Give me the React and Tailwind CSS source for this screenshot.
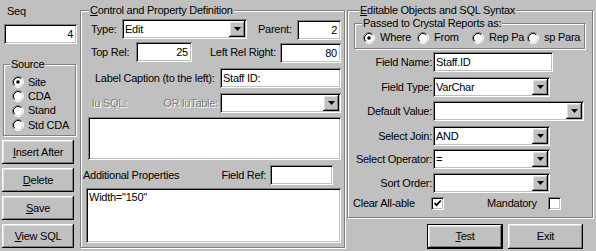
import React from "react";

const sunken =
  "bg-white shadow-[inset_1px_1px_0_#808080,inset_-1px_-1px_0_#fff,inset_2px_2px_0_#000,inset_-2px_-2px_0_#c0c0c0]";
const raised =
  "bg-[#c0c0c0] shadow-[inset_-1px_-1px_0_#000,inset_1px_1px_0_#fff,inset_-2px_-2px_0_#808080,inset_2px_2px_0_#dfdfdf]";
const etched =
  "relative border border-[#808080] shadow-[inset_1px_1px_0_#fff,1px_1px_0_#fff]";
const disabled = "text-[#808080] [text-shadow:1px_1px_0_#fff]";

// plain sunken edit box
const TextBox = ({ value = "", className = "", right = false }) => (
  <div
    className={`${sunken} flex items-center shrink-0 ${
      right ? "justify-end pr-[4px]" : "pl-[3px]"
    } ${className}`}
  >
    {value}
  </div>
);

const ComboBox = ({ value = "", className = "" }) => (
  <div className={`${sunken} flex items-stretch shrink-0 p-[2px] ${className}`}>
    <div className="flex-1 flex items-center pl-[1px] overflow-hidden whitespace-nowrap">
      {value}
    </div>
    <div className={`${raised} w-[16px] flex items-center justify-center`}>
      <svg width="7" height="4" viewBox="0 0 7 4">
        <polygon points="0,0 7,0 3.5,4" fill="#000" />
      </svg>
    </div>
  </div>
);

const Radio = ({ checked }) => (
  <svg width="12" height="12" viewBox="0 0 12 12" className="shrink-0">
    <circle cx="6" cy="6" r="4.5" fill="#fff" />
    <path d="M2.11 9.89 A5.5 5.5 0 0 1 9.89 2.11" stroke="#808080" fill="none" />
    <path d="M9.89 2.11 A5.5 5.5 0 0 1 2.11 9.89" stroke="#fff" fill="none" />
    <path d="M2.82 9.18 A4.5 4.5 0 0 1 9.18 2.82" stroke="#000" fill="none" />
    <path d="M9.18 2.82 A4.5 4.5 0 0 1 2.82 9.18" stroke="#dfdfdf" fill="none" />
    {checked && <circle cx="6" cy="6" r="1.8" fill="#000" />}
  </svg>
);

const CheckBox = ({ checked }) => (
  <div className={`${sunken} w-[13px] h-[13px] shrink-0 flex items-center justify-center`}>
    {checked && (
      <svg width="9" height="9" viewBox="0 0 9 9">
        <polyline points="1.5,4 3.5,6.2 7.8,1.5" stroke="#000" strokeWidth="1.8" fill="none" />
      </svg>
    )}
  </div>
);

const Button = ({ children, className = "", isDefault = false }) =>
  isDefault ? (
    <div className={`border border-black shrink-0 flex ${className}`}>
      <div className={`${raised} flex-1 flex items-center justify-center`}>{children}</div>
    </div>
  ) : (
    <div className={`${raised} shrink-0 flex items-center justify-center ${className}`}>
      {children}
    </div>
  );

const GroupTitle = ({ children, className = "" }) => (
  <span className={`absolute bg-[#c0c0c0] px-[1px] whitespace-nowrap ${className}`}>
    {children}
  </span>
);

const FieldRow = ({ label, className = "", children }) => (
  <div className={`flex items-center ${className}`}>
    <div className="w-[85px] text-right pr-[1px] whitespace-nowrap">{label}</div>
    {children}
  </div>
);

export default function App() {
  return (
    <div className="flex w-[596px] h-[251px] overflow-hidden bg-[#c0c0c0] text-black text-[11px] leading-[13px] tracking-[-0.25px] font-['Liberation_Sans',Arial,sans-serif]">
      {/* left column */}
      <div className="flex flex-col w-[80px] shrink-0">
        <div className="pl-[7px] pt-[5px] h-[24px]">Seq</div>
        <TextBox value="4" right className="ml-[4px] w-[73px] h-[20px]" />

        <div className={`${etched} mt-[20px] ml-[3px] w-[73px] h-[72px]`}>
          <GroupTitle className="left-[6px] top-[-7px]">Source</GroupTitle>
          <div className="flex flex-col pt-[10px] pl-[8px]">
            {[
              ["Site", true],
              ["CDA", false],
              ["Stand", false],
              ["Std CDA", false],
            ].map(([label, on]) => (
              <div key={label} className="flex items-center gap-[4px] h-[14.3px]">
                <Radio checked={on} />
                <span>{label}</span>
              </div>
            ))}
          </div>
        </div>

        <div className="flex flex-col gap-[4px] mt-[4px] ml-[2px]">
          <Button className="w-[72px] h-[24px]">
            <span><u>I</u>nsert After</span>
          </Button>
          <Button className="w-[72px] h-[24px]">
            <span><u>D</u>elete</span>
          </Button>
          <Button className="w-[72px] h-[24px]">
            <span><u>S</u>ave</span>
          </Button>
          <Button className="w-[72px] h-[24px]">
            <span><u>V</u>iew SQL</span>
          </Button>
        </div>
      </div>

      {/* control and property definition */}
      <div className={`${etched} mt-[10px] w-[265px] h-[238px] shrink-0 flex flex-col`}>
        <GroupTitle className="left-[8px] top-[-7px]">
          <u>C</u>ontrol and Property Definition
        </GroupTitle>

        <div className="flex items-start mt-[8px]">
          <div className="ml-[10px] w-[31px] h-[20px] flex items-center">Type:</div>
          <ComboBox value="Edit" className="w-[125px] h-[20px]" />
          <div className="ml-[11px] w-[39px] h-[20px] flex items-center">Parent:</div>
          <TextBox value="2" right className="mt-[1px] w-[44px] h-[20px]" />
        </div>

        <div className="flex items-start mt-[2px]">
          <div className="ml-[10px] w-[45px] h-[20px] flex items-center">Top Rel:</div>
          <TextBox value="25" right className="w-[56px] h-[20px]" />
          <div className="ml-[18px] w-[70px] h-[20px] flex items-center">Left Rel Right:</div>
          <TextBox value="80" right className="mt-[1px] w-[61px] h-[20px]" />
        </div>

        <div className="flex items-center mt-[5px]">
          <div className="ml-[14px] w-[125px] whitespace-nowrap">Label Caption (to the left):</div>
          <TextBox value="Staff ID:" className="w-[121px] h-[20px]" />
        </div>

        <div className="flex items-center mt-[5px]">
          <div className={`ml-[11px] w-[68px] ${disabled}`}>lu SQL:</div>
          <div className={`w-[60px] text-right pr-[2px] whitespace-nowrap ${disabled}`}>OR luTable:</div>
          <ComboBox className="w-[121px] h-[20px]" />
        </div>

        <div className={`${sunken} mt-[4px] ml-[7px] w-[253px] h-[43px]`} />

        <div className="flex items-center mt-[5px]">
          <div className="ml-[2px] w-[187px] pr-[4px] flex items-center justify-between whitespace-nowrap">
            <span>Additional Properties</span>
            <span>Field Ref:</span>
          </div>
          <TextBox className="w-[63px] h-[20px]" />
        </div>

        <div className={`${sunken} mt-[3px] ml-[5px] w-[255px] h-[55px] pl-[3px] pt-[3px]`}>
          Width="150"
        </div>
      </div>

      {/* editable objects and sql syntax */}
      <div className="flex flex-col ml-[2px] shrink-0">
        <div className={`${etched} mt-[10px] w-[246px] h-[208px] flex flex-col`}>
          <GroupTitle className="left-[11px] top-[-7px]">
            <u>E</u>ditable Objects and SQL Syntax
          </GroupTitle>

          <div className={`${etched} mt-[12px] ml-[6px] w-[231px] h-[26px]`}>
            <GroupTitle className="left-[7px] top-[-7px]">Passed to Crystal Reports as:</GroupTitle>
            <div className="flex items-center mt-[7px] ml-[8px]">
              {[
                ["Where", true, "w-[54px]"],
                ["From", false, "w-[55px]"],
                ["Rep Pa", false, "w-[55px]"],
                ["sp Para", false, "w-[56px]"],
              ].map(([label, on, w]) => (
                <div key={label} className={`flex items-center gap-[5px] whitespace-nowrap ${w}`}>
                  <Radio checked={on} />
                  <span>{label}</span>
                </div>
              ))}
            </div>
          </div>

          <FieldRow label="Field Name:" className="mt-[3px]">
            <TextBox value="Staff.ID" className="w-[120px] h-[20px]" />
          </FieldRow>
          <FieldRow label="Field Type:" className="mt-[5px]">
            <ComboBox value="VarChar" className="w-[117px] h-[20px]" />
          </FieldRow>
          <FieldRow label="Default Value:" className="mt-[4px]">
            <ComboBox className="w-[151px] h-[20px]" />
          </FieldRow>
          <FieldRow label="Select Join:" className="mt-[5px]">
            <ComboBox value="AND" className="w-[117px] h-[20px]" />
          </FieldRow>
          <FieldRow label="Select Operator:" className="mt-[3px]">
            <ComboBox value="=" className="w-[117px] h-[20px]" />
          </FieldRow>
          <FieldRow label="Sort Order:" className="mt-[4px]">
            <ComboBox className="w-[117px] h-[20px]" />
          </FieldRow>

          <div className="flex items-center mt-[4px]">
            <div className="ml-[5px] w-[78px]">Clear All-able</div>
            <CheckBox checked />
            <div className="ml-[43px] w-[61px]">Mandatory</div>
            <CheckBox />
          </div>
        </div>

        <div className="flex mt-[6px] ml-[80px]">
          <Button isDefault className="w-[76px] h-[25px]">
            <span><u>T</u>est</span>
          </Button>
          <Button className="ml-[5px] w-[75px] h-[25px]">Exit</Button>
        </div>
      </div>
    </div>
  );
}
